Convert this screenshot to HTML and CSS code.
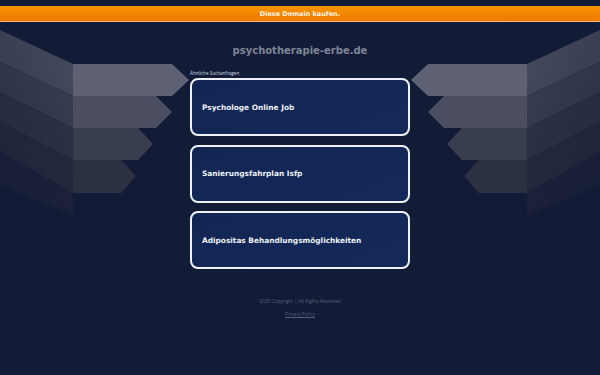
FILE: index.html
```html
<!DOCTYPE html>
<html lang="de">
<head>
  <meta charset="UTF-8" />
  <title>psychotherapie-erbe.de</title>
  <link rel="stylesheet" href="styles.css">
</head>
<body>

<!-- Dekoration im Hintergrund -->
<svg class="deco" viewBox="0 0 600 375" width="600" height="375" aria-hidden="true">
  <defs>
    <linearGradient id="fade" x1="1" y1="0" x2="0" y2="1">
      <stop offset="0" stop-color="#121c36" stop-opacity="0"/>
      <stop offset="1" stop-color="#121c36" stop-opacity="0.5"/>
    </linearGradient>
  </defs>
  <g id="wing">
    <polygon points="0,30 73,64 73,96 0,62" fill="#474b5e"/>
    <polygon points="0,62 73,96 73,128 0,92" fill="#3b3f52"/>
    <polygon points="0,92 73,128 73,160 0,122" fill="#303447"/>
    <polygon points="0,122 73,160 73,193 0,152" fill="#272b3e"/>
    <polygon points="0,152 73,193 73,215 0,185" fill="#1c2238"/>
    <polygon points="0,30 73,64 73,215 0,185" fill="url(#fade)"/>
    <polygon points="73,64 172,64 189,80 172,96 73,96" fill="#5d6173"/>
    <polygon points="73,96 156,96 172,112 156,128 73,128" fill="#4a4e60"/>
    <polygon points="73,128 138,128 153,144 138,160 73,160" fill="#393d50"/>
    <polygon points="73,160 121,160 136,176 121,193 73,193" fill="#2c3043"/>
  </g>
  <use href="#wing" transform="translate(600,0) scale(-1,1)"/>
</svg>

<div class="topbar">Diese Domain kaufen.</div>

<div class="main">
  <h1 class="domain">psychotherapie-erbe.de</h1>
  <div class="label">Ähnliche Suchanfragen</div>
  <div class="links">
    <a class="link" href="#">Psychologe Online Job</a>
    <a class="link" href="#">Sanierungsfahrplan Isfp</a>
    <a class="link" href="#">Adipositas Behandlungsmöglichkeiten</a>
  </div>
</div>

<div class="footer">
  <div class="copy">2025 Copyright | All Rights Reserved</div>
  <a class="privacy" href="#">Privacy Policy</a>
</div>

</body>
</html>
```

FILE: styles.css
```css
body {
  margin: 0;
  padding: 0;
  font-family: "DejaVu Sans", sans-serif;
  background-color: #121c36;
  position: relative;
  height: 375px;
  overflow: hidden;
}

/* Hintergrund-Pfeile */
.deco {
  position: absolute;
  top: 0;
  left: 0;
  z-index: 0;
}

/* Orange Leiste oben */
.topbar {
  position: relative;
  z-index: 1;
  margin-top: 6px;
  height: 15px;
  line-height: 16px;
  background: linear-gradient(#f59400, #f07a00);
  border-bottom: 1px solid #f7b37a;
  color: #fff6ea;
  font-size: 6.5px;
  font-weight: bold;
  text-align: center;
}

.main {
  position: relative;
  z-index: 1;
  width: 220px;
  margin: 0 auto;
}

.domain {
  margin: 18px 0 0;
  height: 22px;
  line-height: 22px;
  font-size: 10px;
  font-weight: bold;
  color: #7d8597;
  text-align: center;
}

.label {
  margin-top: 8px;
  font-family: "Open Sans", sans-serif;
  font-size: 4.6px;
  color: #d5dbe6;
  height: 7px;
  line-height: 7px;
}

.links {
  display: flex;
  flex-direction: column;
  gap: 8.5px;
  margin-top: 1px;
}

.link {
  display: flex;
  align-items: center;
  height: 54px;
  padding: 0 10px;
  border: 2px solid #eef2f8;
  border-radius: 8px;
  background: linear-gradient(160deg, #122552, #14295a);
  color: #eef1f7;
  font-size: 7.4px;
  font-weight: bold;
  text-decoration: none;
}

.footer {
  position: relative;
  z-index: 1;
  margin-top: 29px;
  text-align: center;
  font-family: "Open Sans", sans-serif;
  font-size: 4.8px;
  color: #56617c;
}

.copy {
  line-height: 7px;
}

.privacy {
  display: inline-block;
  margin-top: 6px;
  color: #56617c;
  line-height: 7px;
}
```
